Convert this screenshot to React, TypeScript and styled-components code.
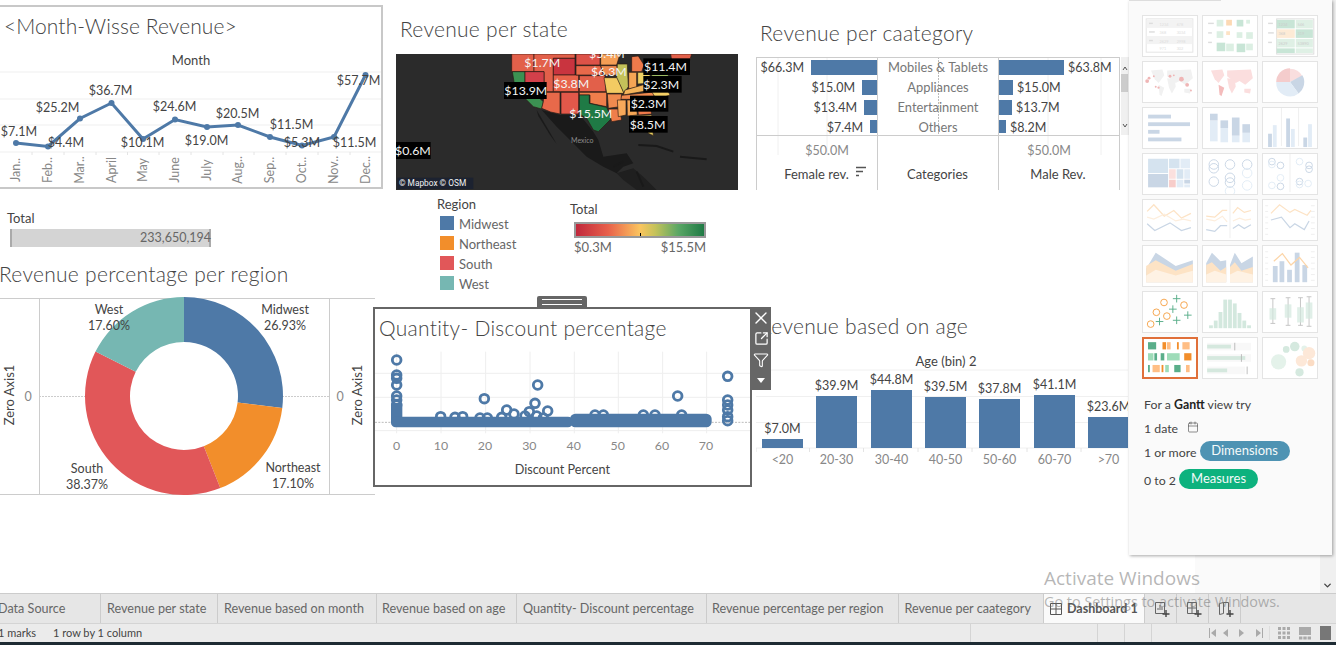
import React from 'react';
import styled, { createGlobalStyle } from 'styled-components';
import { X, SquareArrowOutUpRight, Funnel, Calendar, ChevronDown } from 'lucide-react';

const BLUE = '#4e79a7';
const ORANGE = '#f28e2b';
const RED = '#e15759';
const TEAL = '#76b7b2';

const GlobalStyle = createGlobalStyle`
  html, body {
    margin: 0;
    padding: 0;
    overflow: hidden;
    background: #fff;
    font-family: Lato, "Open Sans", sans-serif;
  }
`;

const months = [
  { name: 'Jan..', x: 16, y: 143, label: '$7.1M', lx: 19, ly: 131 },
  { name: 'Feb..', x: 48, y: 146.5, label: '$25.2M', lx: 57.5, ly: 107 },
  { name: 'Mar..', x: 80, y: 118.5, label: '$4.4M', lx: 66, ly: 142 },
  { name: 'April', x: 111.5, y: 103, label: '$36.7M', lx: 110.5, ly: 90.5 },
  { name: 'May', x: 143, y: 139, label: '$10.1M', lx: 142.5, ly: 142 },
  { name: 'June', x: 175, y: 119.5, label: '$24.6M', lx: 174.5, ly: 106 },
  { name: 'July', x: 207, y: 127, label: '$19.0M', lx: 206.5, ly: 140 },
  { name: 'Aug..', x: 238, y: 125, label: '$20.5M', lx: 237.5, ly: 113 },
  { name: 'Sep..', x: 270, y: 137, label: '$11.5M', lx: 291.5, ly: 124.5 },
  { name: 'Oct..', x: 302, y: 145.5, label: '$5.3M', lx: 302, ly: 142.5 },
  { name: 'Nov..', x: 334, y: 137, label: '$11.5M', lx: 354.5, ly: 142.5 },
  { name: 'Dec..', x: 365.5, y: 75, label: '$57.7M', lx: 358.5, ly: 80.5 },
];

const donut = [
  { name: 'Midwest', pct: 26.93, color: BLUE, lx: 285, ly: 309 },
  { name: 'Northeast', pct: 17.1, color: ORANGE, lx: 293, ly: 467 },
  { name: 'South', pct: 38.37, color: RED, lx: 87, ly: 468 },
  { name: 'West', pct: 17.6, color: TEAL, lx: 109, ly: 309 },
];

const categories = [
  { name: 'Mobiles & Tablets', female: '$66.3M', fx: 811, male: '$63.8M', mx: 1064 },
  { name: 'Appliances', female: '$15.0M', fx: 862, male: '$15.0M', mx: 1013 },
  { name: 'Entertainment', female: '$13.4M', fx: 864, male: '$13.7M', mx: 1012 },
  { name: 'Others', female: '$7.4M', fx: 870, male: '$8.2M', mx: 1006 },
];

const ages = [
  { name: '<20', x: 762, top: 439, label: '$7.0M', ly: 428 },
  { name: '20-30', x: 816, top: 396, label: '$39.9M', ly: 385.5 },
  { name: '30-40', x: 871, top: 390, label: '$44.8M', ly: 379.5 },
  { name: '40-50', x: 925, top: 397, label: '$39.5M', ly: 386.5 },
  { name: '50-60', x: 979, top: 399, label: '$37.8M', ly: 388.5 },
  { name: '60-70', x: 1034, top: 395, label: '$41.1M', ly: 384.5 },
  { name: '>70', x: 1088, top: 417, label: '$23.6M', ly: 406.5 },
];

const states: { color: string; pts: string }[] = [
  { color: '#e2604a', pts: '365,42 432,42 432,95 365,95' },
  { color: '#e2604a', pts: '432,42 555,42 555,55 490,55 490,155 462,155 462,95 432,95' },
  { color: '#3c9152', pts: '367,95 405,95 405,135 460,185 455,207 430,200 395,165 372,125' },
  { color: '#d3404a', pts: '405,95 462,95 462,155 456,178 405,132' },
  { color: '#c9343f', pts: '490,55 555,55 555,105 490,105' },
  { color: '#e8624a', pts: '490,105 566,105 566,155 490,155' },
  { color: '#e8694a', pts: '462,157 510,157 510,222 482,216 455,205 460,185' },
  { color: '#e2584a', pts: '513,157 566,157 566,222 513,222' },
  { color: '#dd5248', pts: '558,42 630,42 630,75 558,75' },
  { color: '#e8694a', pts: '558,77 632,77 640,105 558,105' },
  { color: '#e2604a', pts: '568,107 645,107 648,155 568,155' },
  { color: '#ef7e4b', pts: '568,157 650,157 650,200 600,190 600,165 568,165' },
  { color: '#1f7a45', pts: '568,165 598,165 598,190 650,202 665,235 625,275 610,270 590,235 568,222' },
  { color: '#f59e55', pts: '632,42 690,42 680,75 632,75' },
  { color: '#ef8a50', pts: '632,77 680,77 690,105 642,105' },
  { color: '#f3cb62', pts: '642,113 684,113 702,160 650,160' },
  { color: '#c4c25a', pts: '682,72 712,72 715,140 702,160 680,112' },
  { color: '#ee7a4b', pts: '725,50 745,48 762,75 755,95 725,95' },
  { color: '#f5a555', pts: '716,97 740,97 740,142 716,147' },
  { color: '#f0d265', pts: '743,97 780,97 780,130 743,132' },
  { color: '#f4b45a', pts: '705,150 775,130 785,150 700,165' },
  { color: '#f08a4f', pts: '695,166 800,155 785,178 690,178' },
  { color: '#f08a4f', pts: '652,162 695,162 690,200 655,205' },
  { color: '#ef7e4b', pts: '655,207 688,207 695,240 665,245' },
  { color: '#f8a85a', pts: '682,180 708,180 708,225 685,230' },
  { color: '#f4a555', pts: '711,180 738,180 742,225 712,228' },
  { color: '#ee7a4b', pts: '741,178 775,178 785,222 745,225' },
  { color: '#e8d060', pts: '720,228 785,225 790,287 775,280 760,245 725,238' },
  { color: '#f4cf65', pts: '785,155 830,145 840,165 800,180' },
  { color: '#d9404a', pts: '775,178 805,178 790,205' },
  { color: '#e8d465', pts: '780,125 830,110 835,142 785,152' },
  { color: '#9dbb63', pts: '785,95 835,95 835,118 785,118' },
  { color: '#8cba6a', pts: '805,58 840,55 842,93 785,93' },
  { color: '#e2604a', pts: '842,42 905,42 895,75 850,95' },
];

const mapLabels = [
  { text: '$1.7M', x: 403, y: 81 },
  { text: '$5.4M', x: 597, y: 53 },
  { text: '$6.3M', x: 603, y: 108 },
  { text: '$3.8M', x: 490, y: 144 },
  { text: '$13.9M', x: 343, y: 164, box: [342, 126, 128, 51] },
  { text: '$11.4M', x: 762, y: 93, box: [760, 55, 140, 50] },
  { text: '$2.3M', x: 760, y: 146, box: [760, 108, 115, 50] },
  { text: '$2.3M', x: 722, y: 203, box: [720, 167, 115, 48] },
  { text: '$15.5M', x: 538, y: 235 },
  { text: '$8.5M', x: 719, y: 267, box: [717, 228, 116, 50] },
  { text: '$0.6M', x: 15, y: 344, box: [18, 306, 104, 51] },
];

const scatterCircles = [
  [80, 210], [80, 255], [80, 265], [80, 285], [80, 318], [80, 330], [80, 345],
  [1073, 259], [1073, 330], [1073, 345], [1073, 360], [1073, 380], [1073, 392],
  [343, 326], [503, 285], [495, 340], [410, 360], [533, 363], [432, 372], [923, 318],
  [212, 380], [255, 382], [278, 380], [395, 382], [478, 365], [500, 378], [675, 375],
  [700, 375], [820, 375], [855, 375], [935, 375], [330, 384], [352, 384], [465, 378], [520, 384],
];

const tabs = [
  { label: 'Data Source', width: 100.5, indent: -2 },
  { label: 'Revenue per state', width: 117.5, indent: 6.5 },
  { label: 'Revenue based on month', width: 159, indent: 6 },
  { label: 'Revenue based on age', width: 140, indent: 5 },
  { label: 'Quantity- Discount percentage', width: 189.5, indent: 6 },
  { label: 'Revenue percentage per region', width: 192, indent: 5.5 },
  { label: 'Revenue per caategory', width: 145.5, indent: 6 },
];

function arcPath(cx: number, cy: number, r: number, ir: number, from: number, to: number) {
  const point = (rad: number, pct: number) => {
    const a = (pct / 100) * Math.PI * 2 - Math.PI / 2;
    return `${cx + rad * Math.cos(a)} ${cy + rad * Math.sin(a)}`;
  };
  const large = to - from > 50 ? 1 : 0;
  return `M${point(r, from)} A${r} ${r} 0 ${large} 1 ${point(r, to)} L${point(ir, to)} A${ir} ${ir} 0 ${large} 0 ${point(ir, from)} Z`;
}

const worldLand = [
  '8,9 20,8 22,14 16,22 12,18',
  '16,24 22,27 19,36 17,34',
  '25,9 50,8 52,17 44,24 38,20 34,22 25,15',
  '25,17 33,18 34,26 30,33 27,27',
  '43,28 50,28 49,33 43,32',
];

const TB = '#c9d6e5';
const TL = '#e2ecf6';

function Line({ pts, color }: { pts: string; color: string }) {
  return <polyline points={pts} fill="none" stroke={color} strokeWidth="1.3" />;
}

function Ticks() {
  return (
    <g stroke="#eee">
      {[6, 12, 18, 24, 30, 36].map((y) => (
        <line key={y} x1="50" x2="54" y1={y} y2={y} />
      ))}
      {[6, 12, 18, 24, 30, 36].map((y) => (
        <line key={y} x1="2" x2="5" y1={y} y2={y} />
      ))}
    </g>
  );
}

const thumbs: React.ReactNode[] = [
  <g key="text" fontSize="4" fill="#ddd">
    <rect x="3" y="3" width="49" height="35" fill="none" stroke="#e4e4e4" />
    <rect x="3.5" y="4" width="48" height="8.5" fill="#f3f3f3" />
    <rect x="3.5" y="21" width="48" height="8.5" fill="#f3f3f3" />
    <rect x="6" y="7" width="4" height="1.5" />
    <rect x="6" y="16" width="6" height="1.5" />
    <rect x="6" y="25" width="4" height="1.5" />
    <text x="17" y="10">1234</text><text x="35" y="10">678</text>
    <text x="17" y="19">368</text><text x="35" y="19">3034</text>
    <text x="17" y="28">2629</text><text x="35" y="28">2998</text>
    <text x="17" y="36">971</text><text x="35" y="36">302</text>
  </g>,
  <g key="heat">
    {[[5, 7, 6, 1.5], [5, 17, 4, 1.5], [5, 27, 4, 1.5]].map(([x, y, w, h]) => (
      <rect key={y} x={x} y={y} width={w} height={h} fill="#ddd" />
    ))}
    <rect x="14" y="4" width="7" height="7" fill="#dcefe3" />
    <rect x="24" y="4" width="6" height="6" fill="#fcd9b4" />
    <rect x="35" y="4" width="7" height="7" fill="#c8e5d6" />
    <rect x="45" y="4" width="4" height="4" fill="#dcefe3" />
    <rect x="14" y="16" width="7" height="7" fill="#dcefe3" />
    <rect x="24" y="16" width="4" height="4" fill="#fde3c5" />
    <rect x="35" y="17" width="6" height="6" fill="#dcefe3" />
    <rect x="45" y="17" width="7" height="7" fill="#dcefe3" />
    <rect x="14" y="28" width="9" height="9" fill="#c8e5d6" />
    <rect x="24" y="29" width="8" height="8" fill="#dcefe3" />
    <rect x="35" y="29" width="9" height="9" fill="#c8e5d6" />
    <rect x="45" y="29" width="7" height="7" fill="#dcefe3" />
  </g>,
  <g key="highlight" fontSize="4" fill="#ccc">
    <rect x="14" y="3" width="39" height="37" fill="none" stroke="#ddd" />
    <rect x="14" y="4" width="19" height="9" fill="#c8e5d6" />
    <rect x="34" y="4" width="18" height="9" fill="#dff0e5" />
    <rect x="14" y="14" width="19" height="9" fill="#fdebd6" />
    <rect x="34" y="14" width="18" height="9" fill="#c8e5d6" />
    <rect x="14" y="24" width="19" height="9" fill="#dff0e5" />
    <rect x="34" y="24" width="18" height="9" fill="#dff0e5" />
    <rect x="14" y="34" width="19" height="5" fill="#c8e5d6" />
    <rect x="34" y="34" width="18" height="5" fill="#dff0e5" />
    <rect x="5" y="7" width="5" height="1.5" fill="#ddd" />
    <rect x="5" y="17" width="6" height="1.5" fill="#ddd" />
    <rect x="5" y="27" width="4" height="1.5" fill="#ddd" />
    <text x="16" y="10">1234</text><text x="36" y="10">546</text>
    <text x="16" y="20">368</text><text x="36" y="20">319</text>
    <text x="16" y="30">2629</text><text x="36" y="30">53890</text>
  </g>,
  <g key="symbol">
    {worldLand.map((p) => <polygon key={p} points={p} fill="#f1f1f1" />)}
    {[[6, 17, 1.5], [4, 20, 2], [11, 15, 1], [13, 26, 1], [40, 18, 2.5], [46, 24, 2], [28, 15, 1.5], [50, 30, 1], [16, 27, 1.2], [32, 14, 1]].map(([x, y, r]) => (
      <circle key={`${x}-${y}`} cx={x} cy={y} r={r} fill="#efb5b5" />
    ))}
  </g>,
  <g key="filled">
    {worldLand.map((p, i) => <polygon key={p} points={p} fill={i === 1 ? '#f4bcbc' : '#fbdede'} />)}
  </g>,
  <g key="pie">
    <path d="M28 21 L28 7 A14.5 14.5 0 0 1 41 15 Z" fill="#f9dede" />
    <path d="M28 21 L13.5 21 A14.5 14.5 0 0 1 28 6.5 Z" fill="#f4cccc" />
    <path d="M28 21 L41 14 A14.5 14.5 0 0 1 37 33 Z" fill={TB} />
    <path d="M28 21 L37 33 A14.5 14.5 0 0 1 13.5 21 Z" fill={TL} />
  </g>,
  <g key="hbars" fill={TB}>
    <rect x="5" y="7" width="24" height="4" />
    <rect x="5" y="15" width="44" height="4" />
    <rect x="5" y="23" width="12" height="4" />
    <rect x="5" y="31" width="35" height="4" />
  </g>,
  <g key="stacked">
    <rect x="7" y="13" width="8" height="22" fill={TL} /><rect x="7" y="6" width="8" height="7" fill={TB} />
    <rect x="18" y="21" width="8" height="15" fill={TL} /><rect x="18" y="13" width="8" height="8" fill={TB} />
    <rect x="30" y="29" width="8" height="7" fill={TL} /><rect x="30" y="10" width="8" height="19" fill={TB} />
    <rect x="41" y="26" width="8" height="10" fill={TL} /><rect x="41" y="17" width="8" height="9" fill={TB} />
  </g>,
  <g key="sidebyside">
    <line x1="19" x2="19" y1="0" y2="40" stroke="#eee" /><line x1="37" x2="37" y1="0" y2="40" stroke="#eee" />
    <rect x="5" y="27" width="4" height="14" fill={TB} /><rect x="10" y="18" width="4" height="23" fill={TL} />
    <rect x="24" y="11" width="4" height="30" fill={TB} /><rect x="29" y="22" width="4" height="19" fill={TL} />
    <rect x="42" y="31" width="4" height="10" fill={TB} /><rect x="47" y="17" width="4" height="24" fill={TL} />
  </g>,
  <g key="treemap">
    <rect x="5" y="5" width="21" height="15" fill="#d5e3ef" />
    <rect x="5" y="21" width="21" height="14" fill={TB} />
    <rect x="27" y="5" width="11" height="10" fill="#d5e3ef" />
    <rect x="39" y="5" width="10" height="10" fill={TL} />
    <rect x="27" y="16" width="7" height="10" fill="#fbe0de" />
    <rect x="35" y="16" width="7" height="10" fill="#d5e3ef" />
    <rect x="43" y="16" width="6" height="10" fill={TL} />
    <rect x="27" y="27" width="7" height="8" fill="#f7cdca" />
    <rect x="35" y="27" width="7" height="8" fill={TL} />
    <rect x="43" y="27" width="6" height="4" fill={TB} />
    <rect x="43" y="32" width="6" height="3" fill={TL} />
  </g>,
  <g key="circles" fill="none" strokeWidth="1">
    {[[11, 11, TB], [11, 15, TB], [28, 11, TB], [46, 11, TB], [11, 29, TB], [28, 25, TB], [28, 30, TB], [46, 20, TL], [46, 33, TL], [28, 39, TL]].map(([x, y, c]) => (
      <circle key={`${x}-${y}`} cx={x as number} cy={y as number} r="5" stroke={c as string} />
    ))}
  </g>,
  <g key="circles2" fill="none" strokeWidth="1">
    <line x1="28" x2="28" y1="0" y2="40" stroke="#eee" />
    {[[9, 8, TB], [9, 11, TL], [18, 12, TB], [38, 8, TL], [48, 12, TB], [48, 16, TB], [18, 25, TL], [9, 33, TL], [18, 34, TB], [38, 29, TB], [38, 32, TL], [47, 31, TL]].map(([x, y, c]) => (
      <circle key={`${x}-${y}`} cx={x as number} cy={y as number} r="3.5" stroke={c as string} />
    ))}
  </g>,
  <g key="lines">
    <Line pts="4,12 11,5 22,17 32,11 40,19 50,14" color="#fde3c5" />
    <Line pts="4,18 11,20 22,15 34,22 42,20 50,22" color="#fdeedd" />
    <Line pts="4,25 12,32 28,24 40,32 50,29" color={TB} />
  </g>,
  <g key="lines2">
    <line x1="28" x2="28" y1="0" y2="40" stroke="#eee" />
    <Line pts="3,17 12,18 20,11 25,11" color="#fde3c5" />
    <Line pts="3,20 12,22 20,17 25,23" color="#fdeedd" />
    <Line pts="3,31 12,33 18,27 25,27" color={TB} />
    <Line pts="31,14 36,8 43,13 50,11" color="#fde3c5" />
    <Line pts="31,22 38,19 44,21 50,20" color="#fdeedd" />
    <Line pts="31,30 37,26 43,30 50,26" color={TB} />
  </g>,
  <g key="dual">
    <Ticks />
    <Line pts="8,14 17,5 28,13 33,10 46,16 50,11" color="#fde3c5" />
    <Line pts="8,21 19,18 28,29 33,25 43,31 48,22" color={TB} />
  </g>,
  <g key="area">
    <polygon points="3,24 13,7 34,21 52,15 52,38 3,38" fill={TB} />
    <polygon points="3,21 13,15 34,26 52,19 52,38 3,38" fill="#fde3c5" />
    <polygon points="3,31 13,25 34,31 52,26 52,38 3,38" fill="#fef2e4" />
  </g>,
  <g key="area2">
    <polygon points="3,18 9,7 18,16 24,15 24,38 3,38" fill={TB} />
    <polygon points="3,20 9,17 18,26 24,22 24,38 3,38" fill="#fde3c5" />
    <polygon points="3,30 12,26 24,30 24,38 3,38" fill="#fef2e4" />
    <polygon points="28,20 33,7 40,18 52,11 52,38 28,38" fill={TB} />
    <polygon points="28,22 33,17 40,26 52,22 52,38 28,38" fill="#fde3c5" />
    <polygon points="28,30 36,26 52,30 52,38 28,38" fill="#fef2e4" />
  </g>,
  <g key="combo">
    <Ticks />
    <rect x="10" y="21" width="5" height="17" fill={TB} />
    <rect x="17" y="16" width="5" height="22" fill={TB} />
    <rect x="25" y="25" width="5" height="13" fill={TB} />
    <rect x="33" y="7" width="5" height="31" fill={TB} />
    <rect x="41" y="20" width="5" height="18" fill={TB} />
    <Line pts="11,16 20,8 29,20 38,12 47,23" color="#fcd5a8" />
  </g>,
  <g key="scatter">
    {[[21.7, 11], [42.7, 13.7], [13.7, 21.3], [24.7, 25.3], [7.7, 33.7]].map(([x, y]) => (
      <circle key={x} cx={x} cy={y} r="3.5" fill="none" stroke="#f5a34a" strokeWidth="1" />
    ))}
    {[[35, 7], [31, 18], [46.7, 24.3], [17, 31], [35, 29.7]].map(([x, y]) => (
      <path key={x} d={`M${x - 4} ${y}h8M${x} ${y - 4}v8`} stroke="#5aae8a" strokeWidth="1" />
    ))}
  </g>,
  <g key="histogram" fill="#d3e8de">
    {[3, 8, 17, 30, 30, 26, 16, 8, 3].map((h, i) => (
      <rect key={i} x={6 + 5 * i} y={38 - h} width="4" height={h} />
    ))}
  </g>,
  <g key="box">
    {[[10, 7, 33, 17, 29], [26, 6, 35, 13, 27], [39, 6, 35, 16, 32], [48, 5, 36, 11, 28]].map(([x, t, b, bt, bb]) => (
      <g key={x}>
        <path d={`M${x} ${t}v${b - t}M${x - 2.5} ${t}h5M${x - 2.5} ${b}h5`} stroke="#c4c4c4" fill="none" />
        <rect x={x - 3.5} y={bt} width="7" height={bb - bt} fill="#d3e8de" opacity=".7" />
      </g>
    ))}
  </g>,
  <g key="gantt">
    <rect x="3.7" y="3.5" width="9" height="8" fill="#5aae8a" />
    <rect x="19.7" y="3.5" width="4" height="8" fill={ORANGE} />
    <rect x="24.7" y="3.5" width="4" height="8" fill="#ffbe85" />
    <rect x="35.7" y="3.5" width="2" height="8" fill={ORANGE} />
    <rect x="41.7" y="3.5" width="8" height="8" fill="#ffbe85" />
    <rect x="3.7" y="15.7" width="6" height="8" fill="#9edcb9" />
    <rect x="10.7" y="15.7" width="3" height="8" fill="#5aae8a" />
    <rect x="17.7" y="15.7" width="4" height="8" fill="#5aae8a" />
    <rect x="24.7" y="15.7" width="14" height="8" fill="#9edcb9" />
    <rect x="43.7" y="15.7" width="8" height="8" fill={ORANGE} />
    <rect x="3.7" y="28.7" width="2" height="8" fill="#5aae8a" />
    <rect x="8.7" y="28.7" width="8" height="8" fill="#ffbe85" />
    <rect x="18.7" y="28.7" width="2" height="8" fill={ORANGE} />
    <rect x="22.7" y="28.7" width="4" height="8" fill="#9edcb9" />
    <rect x="32.7" y="28.7" width="7" height="8" fill="#5aae8a" />
    <rect x="45.7" y="28.7" width="4" height="8" fill="#ffbe85" />
  </g>,
  <g key="bullet">
    <rect x="4" y="5" width="46" height="8" fill="#f8f8f8" />
    <rect x="4" y="17" width="46" height="8" fill="#f8f8f8" />
    <rect x="4" y="30" width="40" height="8" fill="#f8f8f8" />
    <rect x="4" y="7" width="25" height="4" fill="#d5e8de" />
    <rect x="4" y="19" width="40" height="4" fill="#d5e8de" />
    <rect x="4" y="32" width="21" height="4" fill="#d5e8de" />
    <path d="M33 5v8M40 17v8M46 30v8" stroke="#bbb" />
  </g>,
  <g key="bubbles">
    {[[18, 27, 8, '#e4f2ea'], [26, 14, 3.5, '#d5e9df'], [35, 11, 5, '#d5e9df'], [45, 13, 3, '#e4f2ea'], [50, 18, 6.5, '#fde8d8'], [42, 26, 6, '#fde8d8'], [52, 28, 3.7, '#fbdcc4'], [40, 38, 4.3, '#d5e9df']].map(([x, y, r, c]) => (
      <circle key={`${x}-${y}`} cx={(x as number) - 2} cy={(y as number) - 2} r={r as number} fill={c as string} />
    ))}
  </g>,
];

export default function App() {
  let running = 0;
  return (
    <>
      <GlobalStyle />
      <Page>
        <Canvas>
          <Columns>
            <LeftColumn>
              <MonthTile>
                <MonthTitle $x={4} $h={38}>&lt;Month-Wisse Revenue&gt;</MonthTitle>
                <svg width="381" height="142" viewBox="0 45 381 142">
                  <HeaderText x="191" y="65">Month</HeaderText>
                  {[72, 99, 125, 152].map((y) => (
                    <line key={y} x1="0" x2="381" y1={y} y2={y} stroke="#efefef" />
                  ))}
                  {months.map((m) => (
                    <line key={m.name} x1={m.x + 16} x2={m.x + 16} y1="152" y2="155" stroke="#e4e4e4" />
                  ))}
                  <polyline
                    points={months.map((m) => `${m.x},${m.y}`).join(' ')}
                    fill="none"
                    stroke={BLUE}
                    strokeWidth="3"
                  />
                  {months.map((m) => (
                    <circle key={m.name} cx={m.x} cy={m.y} r="3" fill={BLUE} />
                  ))}
                  {months.map((m) => (
                    <ValueText key={m.name} x={m.lx} y={m.ly + 4.5} textAnchor="middle">{m.label}</ValueText>
                  ))}
                  {months.map((m) => (
                    <AxisText key={m.name} x={m.x + 4} y="170" textAnchor="middle" transform={`rotate(-90 ${m.x + 4} 170)`}>
                      {m.name}
                    </AxisText>
                  ))}
                </svg>
              </MonthTile>
              <TotalBlock>
                <FieldLabel>Total</FieldLabel>
                <TotalBar>233,650,194</TotalBar>
              </TotalBlock>
              <Title $x={-1} $h={36}>Revenue percentage per region</Title>
              <DonutChart width="380" height="199" viewBox="0 297 380 199">
                <path d="M0 298.5H375M0 494.5H375M39.5 298V494M329.5 298V494" stroke="#ccc" fill="none" />
                <path d="M39 396.5H86M282 396.5H330" stroke="#ccc" strokeDasharray="2 1" fill="none" />
                {donut.map((d) => {
                  const from = running;
                  running += d.pct;
                  return <path key={d.name} d={arcPath(184, 396, 99, 54, from, running)} fill={d.color} />;
                })}
                {donut.map((d) => (
                  <g key={d.name}>
                    <ValueText x={d.lx} y={d.ly + 4.5} textAnchor="middle">{d.name}</ValueText>
                    <ValueText x={d.lx} y={d.ly + 20.5} textAnchor="middle">{d.pct.toFixed(2)}%</ValueText>
                  </g>
                ))}
                <AxisText x="28" y="401" textAnchor="middle">0</AxisText>
                <AxisText x="340" y="401" textAnchor="middle">0</AxisText>
                <HeaderText x="10" y="395" transform="rotate(-90 10 395) translate(0 4)">Zero Axis1</HeaderText>
                <HeaderText x="358" y="395" transform="rotate(-90 358 395) translate(0 4)">Zero Axis1</HeaderText>
              </DonutChart>
            </LeftColumn>

            <MiddleColumn>
              <Title $x={4} $h={36}>Revenue per state</Title>
              <MapFrame>
                <svg width="342" height="136" viewBox="18 42 1026 408">
                  <rect x="18" y="42" width="1026" height="408" fill="#2b2b2b" />
                  <polygon points="455,210 510,225 570,225 610,275 625,300 640,350 710,340 730,370 700,380 680,400 640,380 590,350 540,300 500,260" fill="#1a1a1a" />
                  <polygon points="440,210 470,260 500,312 480,285 445,228" fill="#1a1a1a" />
                  <polygon points="680,400 730,385 760,410 800,450 740,450 700,420" fill="#1f1f1f" />
                  <path d="M745 315 L800 318 L850 335 M870 350 L950 358 M670 380 L700 365 M740 395 L760 440" stroke="#191919" strokeWidth="6" fill="none" />
                  {states.map((s) => (
                    <polygon key={s.pts} points={s.pts} fill={s.color} stroke="#2a1a14" strokeWidth="2" />
                  ))}
                  <text x="543" y="310" fill="#8d8d8d" fontSize="21" fontFamily="Lato, sans-serif">Mexico</text>
                  {mapLabels.map((l) => (
                    <g key={l.text + l.x}>
                      {l.box && <rect x={l.box[0]} y={l.box[1]} width={l.box[2]} height={l.box[3]} fill="#000" />}
                      <MapText x={l.x} y={l.y}>{l.text}</MapText>
                    </g>
                  ))}
                  <rect x="22" y="413" width="228" height="34" fill="#1c2230" />
                  <text x="27" y="437" fill="#f2f2f2" fontSize="25" fontFamily="Roboto, sans-serif">© Mapbox © OSM</text>
                </svg>
              </MapFrame>
              <LegendRow>
                <RegionLegend>
                  <FieldLabel>Region</FieldLabel>
                  {donut.map((d) => (
                    <LegendItem key={d.name}>
                      <Swatch $color={d.color} />
                      {d.name}
                    </LegendItem>
                  ))}
                </RegionLegend>
                <TotalLegend>
                  <FieldLabel>Total</FieldLabel>
                  <GradientBar />
                  <GradientLabels>
                    <span>$0.3M</span>
                    <span>$15.5M</span>
                  </GradientLabels>
                </TotalLegend>
              </LegendRow>
            </MiddleColumn>

            <RightColumn>
              <Title $x={4} $h={36}>Revenue per caategory</Title>
              <CategoryChart width="373" height="136" viewBox="756 56 373 136">
                <path d="M778 57V155M827 57V155M1048 57V155M1101 57V155" stroke="#f0f0f0" fill="none" />
                <path d="M938.5 57V135" stroke="#bbb" strokeDasharray="2 1" fill="none" />
                <path d="M756.5 57.5H1119.5M756.5 135.5H1119.5M756.5 57V190M877.5 57V190M998.5 57V190M1119.5 57V190" stroke="#ccc" fill="none" />
                {categories.map((c, i) => {
                  const y = 67.5 + i * 20;
                  return (
                    <g key={c.name}>
                      <rect x={c.fx} y={y - 7.5} width={877 - c.fx} height={i === 3 ? 13 : 15} fill={BLUE} />
                      <rect x="999" y={y - 7.5} width={c.mx - 999} height={i === 3 ? 13 : 15} fill={BLUE} />
                      <ValueText x={c.fx - 7} y={y + 4.5} textAnchor="end">{c.female}</ValueText>
                      <ValueText x={c.mx + 4} y={y + 4.5}>{c.male}</ValueText>
                      <CategoryText x="938" y={y + 4.5} textAnchor="middle">{c.name}</CategoryText>
                    </g>
                  );
                })}
                <AxisText x="827" y="155" textAnchor="middle">$50.0M</AxisText>
                <AxisText x="1049" y="155" textAnchor="middle">$50.0M</AxisText>
                <HeaderText x="816.5" y="179">Female rev.</HeaderText>
                <path d="M856 167.5h10M856 171.5h7M856 175.5h3" stroke="#555" strokeWidth="1.5" fill="none" />
                <HeaderText x="937.5" y="179">Categories</HeaderText>
                <HeaderText x="1058" y="179">Male Rev.</HeaderText>
                <rect x="1121" y="57" width="8" height="78" fill="#f0f0f0" />
                <rect x="1121" y="74" width="7" height="18" fill="#ccc" />
                <path d="M1123 70l2-3 2 3M1123 124l2 3 2-3" stroke="#555" fill="none" />
              </CategoryChart>
              <AgeTitle $x={3} $h={36}>Revenue based on age</AgeTitle>
              <svg width="372" height="126" viewBox="756 344 372 126">
                <HeaderText x="946" y="366">Age (bin) 2</HeaderText>
                {[370, 396.5, 422.5, 448].map((y) => (
                  <line key={y} x1="756" x2="1128" y1={y} y2={y} stroke="#f0f0f0" />
                ))}
                {[756, 809.5, 863.5, 918, 972, 1027, 1081].map((x) => (
                  <line key={x} x1={x} x2={x} y1="448" y2="452" stroke="#e4e4e4" />
                ))}
                {ages.map((a) => (
                  <g key={a.name}>
                    <rect x={a.x} y={a.top} width={Math.min(41, 1128 - a.x)} height={448 - a.top} fill={BLUE} />
                    <ValueText x={a.x + 20.5} y={a.ly + 4.5} textAnchor="middle">{a.label}</ValueText>
                    <AxisText x={a.x + 20.5} y="464" textAnchor="middle">{a.name}</AxisText>
                  </g>
                ))}
              </svg>
            </RightColumn>
          </Columns>

          <SideStrip>
            <ChevronDown size={11} strokeWidth={3} color="#444" />
          </SideStrip>

          <FloatHandle />
          <FloatTile>
            <Title $x={4} $h={38}>Quantity- Discount percentage</Title>
            <svg width="375" height="140" viewBox="15 165 1125 420">
              {[80, 213, 347, 480, 613, 745, 878, 1010].map((x) => (
                <line key={x} x1={x} x2={x} y1="185" y2="430" stroke="#eee" strokeWidth="3" />
              ))}
              {[250, 322, 422].map((y) => (
                <line key={y} x1="15" x2="1140" y1={y} y2={y} stroke="#eee" strokeWidth="3" />
              ))}
              <line x1="15" x2="1140" y1="397" y2="397" stroke="#bbb" strokeWidth="3" strokeDasharray="6 4" />
              {scatterCircles.map(([x, y]) => (
                <circle key={`${x}-${y}`} cx={x} cy={y} r="13" fill="none" stroke={BLUE} strokeWidth="8.5" />
              ))}
              <rect x="63" y="340" width="34" height="60" fill={BLUE} />
              <rect x="63" y="380" width="545" height="32" rx="14" fill={BLUE} />
              <rect x="600" y="371" width="425" height="41" rx="16" fill={BLUE} />
              {[0, 10, 20, 30, 40, 50, 60, 70].map((t, i) => (
                <ScatterTick key={t} x={[80, 213, 345, 478, 611, 743, 876, 1008][i]} y="479" textAnchor="middle">{t}</ScatterTick>
              ))}
              <ScatterHeader x="577" y="551">Discount Percent</ScatterHeader>
            </svg>
          </FloatTile>
          <FloatToolbar>
            <ToolCell><X size={20} strokeWidth={1.6} /></ToolCell>
            <ToolCell><SquareArrowOutUpRight size={15} strokeWidth={2} /></ToolCell>
            <ToolCell><Funnel size={16} strokeWidth={1.6} /></ToolCell>
            <ToolCell><Caret /></ToolCell>
          </FloatToolbar>

          <ShowMe>
            <ThumbGrid>
              {thumbs.map((t, i) => (
                <Thumb key={i} $selected={i === 21} viewBox="0 0 56 42">
                  {t}
                </Thumb>
              ))}
            </ThumbGrid>
            <Hint>For a <b>Gantt</b> view try</Hint>
            <Hint>1 date <Calendar size={12} strokeWidth={1.2} style={{ marginLeft: 6, marginBottom: 3 }} /></Hint>
            <Hint>1 or more <Pill $color="#4e93b3" $w={90}>Dimensions</Pill></Hint>
            <LastHint>0 to 2 <Pill $color="#0db27e" $w={79}>Measures</Pill></LastHint>
          </ShowMe>
        </Canvas>

        <TabBar>
          {tabs.map((t) => (
            <Tab key={t.label} $w={t.width} $indent={t.indent}>{t.label}</Tab>
          ))}
          <ActiveTab>
            <svg width="12" height="12" viewBox="0 0 12 12">
              <path d="M.5.5h11v11H.5zM6 .5v11M.5 6h11" fill="none" stroke="#555" />
            </svg>
            Dashboard 1
          </ActiveTab>
          <IconTab>
            <svg width="16" height="16" viewBox="0 0 16 16" fill="none" stroke="#666">
              <path d="M1.5 1.5h9v11h-9zM4 9V7M6 9V4M8 9V6" />
              <path d="M12 9v7M8.5 13h7" stroke="#444" strokeWidth="1.4" />
            </svg>
          </IconTab>
          <IconTab>
            <svg width="16" height="16" viewBox="0 0 16 16" fill="none" stroke="#666">
              <path d="M1.5 1.5h9v11h-9zM6 1.5v11M1.5 7h9" />
              <path d="M12 9v7M8.5 13h7" stroke="#444" strokeWidth="1.4" />
            </svg>
          </IconTab>
          <IconTab>
            <svg width="16" height="16" viewBox="0 0 16 16" fill="none" stroke="#666">
              <path d="M1.5 2.5l4-1v11l-4 1zM5.5 1.5h5v11" />
              <path d="M12 9v7M8.5 13h7" stroke="#444" strokeWidth="1.4" />
            </svg>
          </IconTab>
        </TabBar>

        <StatusBar>
          <StatusText $w={53} $indent={-2}>1 marks</StatusText>
          <StatusText $w={916.5} $indent={0}>1 row by 1 column</StatusText>
          <StatusCell $w={127} />
          <StatusCell $w={27} />
          <StatusCell $w={27} />
          <StatusControls>
            <svg width="58" height="10" viewBox="0 0 58 10" fill="#aaa">
              <path d="M2 0h1v10H2zM9 1v8L4 5zM21 1v8l-5-4zM32 1v8l5-4zM49 1v8l5-4zM55 0h1v10h-1z" />
            </svg>
            <ViewIcons>
              <svg width="12" height="14" viewBox="0 0 12 14" fill="#aaa">
                {[0, 4.5, 9].flatMap((y) => [0, 4.5, 9].map((x) => <rect key={`${x}-${y}`} x={x} y={y + 1} width="3" height="3" />))}
              </svg>
              <svg width="12" height="14" viewBox="0 0 12 14" fill="#aaa">
                <rect y="1" width="12" height="8" />
                <rect y="10.5" width="3.4" height="3" /><rect x="4.3" y="10.5" width="3.4" height="3" /><rect x="8.6" y="10.5" width="3.4" height="3" />
              </svg>
              <svg width="12" height="14" viewBox="0 0 12 14" fill="#777">
                <rect y="0" width="11" height="14" />
              </svg>
            </ViewIcons>
          </StatusControls>
        </StatusBar>
        <BottomEdge />

        <Watermark>
          <strong>Activate Windows</strong>
          <span>Go to Settings to activate Windows.</span>
        </Watermark>
      </Page>
    </>
  );
}

const Page = styled.div`
  position: relative;
  width: 1336px;
  height: 645px;
  display: flex;
  flex-direction: column;
  overflow: hidden;
  color: #555;
`;

const Canvas = styled.div`
  position: relative;
  height: 593px;
  flex: none;
  overflow: hidden;
`;

const Columns = styled.div`
  display: flex;
  align-items: flex-start;
`;

const LeftColumn = styled.div`
  width: 383px;
  flex: none;
  padding-top: 5px;
`;

const MiddleColumn = styled.div`
  width: 342px;
  flex: none;
  margin-left: 13px;
  padding-top: 11px;
`;

const RightColumn = styled.div`
  width: 372px;
  flex: none;
  margin-left: 18px;
  padding-top: 15px;
`;

const Title = styled.div<{ $x: number; $h: number }>`
  margin-left: ${(p) => p.$x}px;
  height: ${(p) => p.$h}px;
  line-height: ${(p) => p.$h}px;
  font-size: 21px;
  font-weight: 300;
  letter-spacing: 0.28px;
  color: #444;
  white-space: nowrap;
`;

const MonthTitle = styled(Title)`
  letter-spacing: 0.08px;
`;

const AgeTitle = styled(Title)`
  margin-top: 116px;
`;

const MonthTile = styled.section`
  width: 381px;
  height: 180px;
  margin-left: -2px;
  padding-left: 2px;
  border: 2px solid #c8c8c8;
  border-left: none;
  svg {
    display: block;
  }
`;

const TotalBlock = styled.div`
  margin: 21px 0 9px 7px;
`;

const FieldLabel = styled.div`
  height: 16px;
  line-height: 16px;
  font-size: 13px;
  color: #444;
`;

const TotalBar = styled.div`
  width: 201px;
  height: 18px;
  margin: 3px 0 0 3px;
  line-height: 18px;
  font-size: 12.5px;
  color: #666;
  text-align: right;
  background:
    linear-gradient(#aaa, #aaa) 0 0 / 2px 100% no-repeat,
    linear-gradient(#aaa, #aaa) 100% 0 / 2px 100% no-repeat,
    #d4d4d4;
`;

const DonutChart = styled.svg`
  display: block;
  margin-top: 5px;
`;

const MapFrame = styled.div`
  margin-top: 7px;
  height: 136px;
  svg {
    display: block;
  }
`;

const LegendRow = styled.div`
  display: flex;
  margin-top: 6px;
  padding-left: 41px;
`;

const RegionLegend = styled.div`
  width: 133px;
  flex: none;
`;

const LegendItem = styled.div`
  height: 20px;
  display: flex;
  align-items: center;
  gap: 5px;
  padding-left: 3px;
  font-size: 13px;
  color: #666;
  &:nth-child(2) {
    margin-top: 2px;
  }
`;

const Swatch = styled.span<{ $color: string }>`
  width: 14px;
  height: 14px;
  margin-top: -2px;
  background: ${(p) => p.$color};
`;

const TotalLegend = styled.div`
  width: 136px;
  padding-top: 5px;
`;

const GradientBar = styled.div`
  width: 128px;
  height: 12px;
  margin: 5px 0 0 4px;
  border: 2px solid #999;
  background:
    linear-gradient(#000, #000) 50% 100% / 1px 3px no-repeat,
    linear-gradient(90deg, #c0283c 0%, #e8604a 25%, #fbc55f 50%, #c4c25a 62%, #5aa765 80%, #1f7a45 100%);
`;

const GradientLabels = styled.div`
  width: 132px;
  margin: 1px 0 0 4px;
  display: flex;
  justify-content: space-between;
  font-size: 13px;
  line-height: 16px;
  color: #666;
`;

const CategoryChart = styled.svg`
  display: block;
  margin-top: 5px;
`;

const ValueText = styled.text`
  font-size: 12.5px;
  fill: #444;
`;

const AxisText = styled.text`
  font-size: 12.5px;
  fill: #888;
`;

const CategoryText = styled.text`
  font-size: 12.9px;
  fill: #777;
`;

const HeaderText = styled.text`
  font-size: 13px;
  fill: #444;
  text-anchor: middle;
`;

const MapText = styled.text`
  font-size: 37px;
  fill: #f4f4f4;
`;

const ScatterTick = styled.text`
  font-size: 37px;
  fill: #888;
`;

const ScatterHeader = styled.text`
  font-size: 38px;
  fill: #444;
  text-anchor: middle;
`;

const SideStrip = styled.div`
  position: absolute;
  right: 0;
  top: 0;
  bottom: 0;
  width: 141px;
  display: flex;
  justify-content: flex-end;
  align-items: flex-end;
  padding-bottom: 2px;
  background: linear-gradient(90deg, #fafafa 125px, #f0f0f0 125px);
  box-sizing: border-box;
  svg {
    margin-right: 3px;
  }
`;

const FloatHandle = styled.div`
  position: absolute;
  left: 537px;
  top: 296px;
  width: 50px;
  height: 12px;
  box-sizing: border-box;
  background: #666;
  border-radius: 2px 2px 0 0;
  &::after {
    content: '';
    display: block;
    margin: 3px 5px 0;
    height: 2px;
    border-top: 1px solid #fff;
    border-bottom: 1px solid #fff;
    padding-bottom: 2px;
  }
`;

const FloatTile = styled.section`
  position: absolute;
  left: 373px;
  top: 307px;
  width: 375px;
  height: 176px;
  border: 2px solid #666;
  background: #fff;
  svg {
    display: block;
    margin-top: -2px;
  }
`;

const FloatToolbar = styled.div`
  position: absolute;
  left: 751px;
  top: 307px;
  width: 20px;
  height: 83px;
  display: grid;
  grid-auto-rows: 21px;
  justify-items: center;
  align-items: center;
  background: #666;
  color: #fff;
`;

const ToolCell = styled.div`
  width: 20px;
  height: 21px;
  display: flex;
  align-items: center;
  justify-content: center;
`;

const Caret = styled.span`
  width: 0;
  height: 0;
  border-left: 4px solid transparent;
  border-right: 4px solid transparent;
  border-top: 5px solid #fff;
`;

const ShowMe = styled.aside`
  position: absolute;
  left: 1129px;
  top: 0;
  width: 203px;
  height: 555px;
  box-sizing: border-box;
  padding: 15px 0 0 13px;
  background: #fafafa;
  box-shadow: 1px 1px 3px rgba(0, 0, 0, 0.35);
  &::before {
    content: '';
    position: absolute;
    left: 0;
    top: 0;
    width: 92px;
    height: 1px;
    background: #ddd;
  }
`;

const ThumbGrid = styled.div`
  display: grid;
  grid-template-columns: repeat(3, 56px);
  grid-auto-rows: 42px;
  column-gap: 4px;
  row-gap: 4px;
  margin-bottom: 13px;
`;

const Thumb = styled.svg<{ $selected: boolean }>`
  width: 56px;
  height: 42px;
  box-sizing: border-box;
  background: #fff;
  border: ${(p) => (p.$selected ? '2.5px solid #e0703a' : '1.5px solid #e4e4e4')};
  font-family: Lato, sans-serif;
`;

const Hint = styled.div`
  height: 24px;
  display: flex;
  align-items: center;
  padding-left: 2px;
  font-size: 12.3px;
  color: #444;
  white-space: pre;
  b {
    color: #222;
  }
`;

const LastHint = styled(Hint)`
  margin-top: 4px;
`;

const Pill = styled.span<{ $color: string; $w: number }>`
  width: ${(p) => p.$w}px;
  height: 20px;
  line-height: 19px;
  margin-top: -3px;
  border-radius: 10px;
  text-align: center;
  font-size: 13px;
  color: #f4fafa;
  background: ${(p) => p.$color};
`;

const Watermark = styled.div`
  position: absolute;
  left: 1044px;
  top: 566px;
  display: flex;
  flex-direction: column;
  font-family: "Open Sans", sans-serif;
  color: rgba(110, 110, 110, 0.5);
  pointer-events: none;
  white-space: nowrap;
  strong {
    font-size: 19px;
    font-weight: 400;
    line-height: 25px;
  }
  span {
    font-size: 14.4px;
    line-height: 21px;
  }
`;

const TabBar = styled.nav`
  height: 31px;
  flex: none;
  display: flex;
  box-sizing: border-box;
  border-top: 1px solid #ccc;
  border-bottom: 1px solid #d4d4d4;
  background: #e6e6e6;
  font-size: 12.6px;
  color: #666;
`;

const Tab = styled.div<{ $w: number; $indent: number }>`
  width: ${(p) => p.$w}px;
  flex: none;
  box-sizing: border-box;
  padding-left: ${(p) => Math.max(p.$indent, 0)}px;
  text-indent: ${(p) => Math.min(p.$indent, 0)}px;
  line-height: 29px;
  border-right: 1px solid #ccc;
  white-space: nowrap;
  overflow: hidden;
`;

const ActiveTab = styled.div`
  width: 101px;
  flex: none;
  box-sizing: border-box;
  display: flex;
  align-items: center;
  gap: 5px;
  padding-left: 6px;
  background: #fafafa;
  font-size: 12.5px;
  font-weight: 700;
  color: #555;
  border-right: 1px solid #ccc;
`;

const IconTab = styled.div`
  width: 32px;
  flex: none;
  box-sizing: border-box;
  display: flex;
  align-items: center;
  justify-content: center;
  padding-left: 2px;
  border-right: 1px solid #ccc;
`;

const StatusBar = styled.footer`
  height: 18px;
  flex: none;
  display: flex;
  background: #ebebeb;
  font-size: 11px;
  color: #444;
  line-height: 18px;
`;

const StatusText = styled.div<{ $w: number; $indent: number }>`
  width: ${(p) => p.$w}px;
  flex: none;
  box-sizing: border-box;
  text-indent: ${(p) => p.$indent}px;
  white-space: nowrap;
`;

const StatusCell = styled.div<{ $w: number }>`
  width: ${(p) => p.$w}px;
  flex: none;
  box-sizing: border-box;
  border-left: 1px solid #d4d4d4;
`;

const StatusControls = styled.div`
  flex: 1;
  display: flex;
  align-items: center;
  padding-left: 55px;
  border-left: 1px solid #d4d4d4;
`;

const ViewIcons = styled.div`
  display: flex;
  gap: 9px;
  margin-left: 4px;
  padding-left: 8px;
  border-left: 1px solid #ddd;
`;

const BottomEdge = styled.div`
  height: 3px;
  flex: none;
  background: #1e2b33;
`;
